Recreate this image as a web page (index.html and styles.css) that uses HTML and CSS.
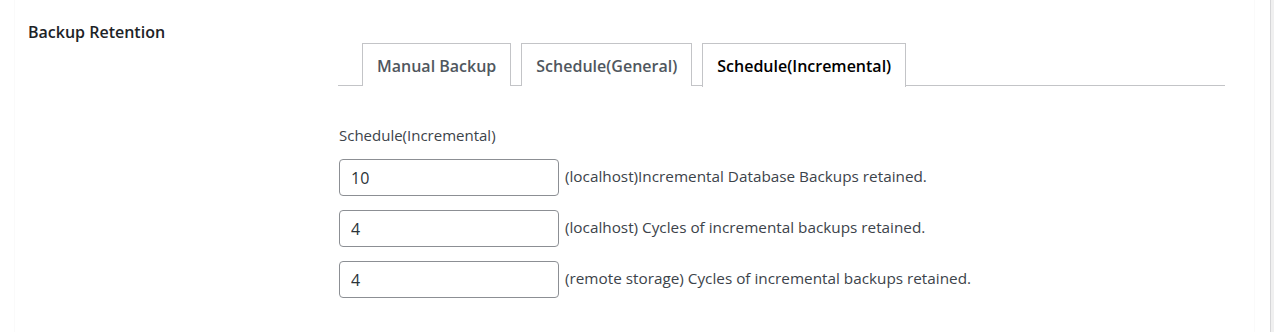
FILE: index.html
```html
<!DOCTYPE html>
<html>
<head>
<meta charset="utf-8">
<link rel="stylesheet" href="styles.css">
</head>
<body>
<div class="page">
  <div class="panel">
    <div class="row">
      <div class="th">Backup Retention</div>
      <div class="td">
        <div class="tabs">
          <div class="tab">Manual Backup</div>
          <div class="tab">Schedule(General)</div>
          <div class="tab active">Schedule(Incremental)</div>
        </div>
        <div class="content">
          <div class="label">Schedule(Incremental)</div>
          <div class="field"><input class="num" type="text" value="10"><span class="desc">(localhost)Incremental Database Backups retained.</span></div>
          <div class="field"><input class="num" type="text" value="4"><span class="desc">(localhost) Cycles of incremental backups retained.</span></div>
          <div class="field"><input class="num" type="text" value="4"><span class="desc">(remote storage) Cycles of incremental backups retained.</span></div>
        </div>
      </div>
    </div>
  </div>
  <div class="scrollbar"></div>
</div>
</body>
</html>
```

FILE: styles.css
```css
html, body {
  margin: 0;
  padding: 0;
  background: #ffffff;
  font-family: "Open Sans", "Noto Sans", sans-serif;
  color: #3c434a;
}
.page {
  display: flex;
  width: 1274px;
  height: 332px;
}
.panel {
  flex: 1;
  margin-left: 14px;
  margin-right: 15px;
  border-left: 1px solid #fafafa;
  border-right: 1px solid #fafafa;
}
.scrollbar {
  width: 3px;
  border-left: 1px solid #d6d6d8;
  background: #f0f0f0;
}
.row {
  display: flex;
  padding-top: 21px;
}
.th {
  width: 310px;
  padding-left: 13px;
  font-size: 16px;
  font-weight: 600;
  color: #1d2327;
  line-height: 22px;
}
.td {
  width: 887px;
}
.tabs {
  display: flex;
  gap: 10px;
  padding-left: 24px;
  margin-top: 22px;
  border-bottom: 1px solid #c3c4c7;
  height: 42px;
}
.tab {
  box-sizing: border-box;
  height: 43px;
  padding: 0 14px;
  border: 1px solid #c3c4c7;
  border-bottom: none;
  background: #fff;
  font-size: 16px;
  font-weight: 600;
  line-height: 44px;
  color: #50575e;
}
.tab.active {
  color: #000;
  height: 44px;
  background: #fff;
}
.content {
  padding-top: 39px;
}
.label {
  font-size: 15px;
  line-height: 20px;
  color: #3c434a;
  margin-left: 1px;
  margin-bottom: 14px;
}
.field {
  display: flex;
  align-items: center;
  margin-bottom: 14px;
}
.num {
  box-sizing: border-box;
  width: 220px;
  height: 37px;
  margin: 0 0 0 1px;
  padding: 0 11px;
  border: 1px solid #8c8f94;
  border-radius: 4px;
  font-family: "Open Sans", "Noto Sans", sans-serif;
  font-size: 16px;
  color: #2c3338;
  background: #fff;
}
.desc {
  margin-left: 6px;
  font-size: 15.3px;
  color: #3c434a;
  position: relative;
  top: -2px;
}
```
